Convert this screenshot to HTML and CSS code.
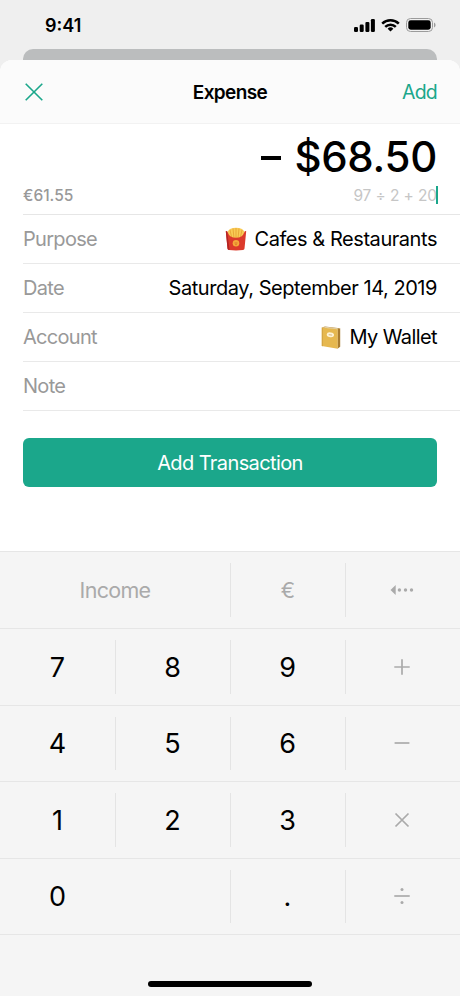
FILE: index.html
```
<!DOCTYPE html>
<html lang="en">

<head>
    <meta charset="UTF-8">
    <meta name="viewport" content="width=device-width, initial-scale=1.0">
    <title>Expense</title>
    <link rel="stylesheet" href="styles.css">
</head>

<body>
    <div class="phone">
        <div class="status">
            <span class="time">9:41</span>
            <svg class="status-icons" width="84" height="16" viewBox="0 0 84 16">
                <rect x="1" y="10" width="4" height="5" rx="1.2" />
                <rect x="6.7" y="7.6" width="4" height="7.4" rx="1.2" />
                <rect x="12.4" y="4.9" width="4" height="10.1" rx="1.2" />
                <rect x="17.9" y="2" width="4" height="13" rx="1.2" />
                <g fill="none" stroke="#000" stroke-width="2.5">
                    <path d="M29.2 6.6a12 12 0 0 1 16.6 0" />
                    <path d="M32.2 9.8a7.6 7.6 0 0 1 10.6 0" />
                </g>
                <path d="M34.6 11.7a4.2 4.2 0 0 1 5.8 0l-2.9 2.9z" />
                <rect x="53.5" y="1.5" width="26" height="13" rx="4" fill="none" stroke="#9b9b9b" />
                <rect x="55.3" y="3.3" width="22.4" height="9.4" rx="2.4" />
                <path d="M81 5.6v4.8q1.6-.8 1.6-2.4T81 5.6z" fill="#9b9b9b" />
            </svg>
        </div>
        <div class="back-card"></div>

        <div class="sheet">
            <div class="header">
                <svg class="close" width="18" height="18" viewBox="0 0 18 18">
                    <path d="M.7.7l16.6 16.6M17.3.7L.7 17.3" />
                </svg>
                <span class="title">Expense</span>
                <span class="add">Add</span>
            </div>

            <div class="amount">
                <div class="total"><span class="minus"></span>$68.50</div>
                <div class="calc">
                    <span class="converted">€61.55</span>
                    <span class="formula">97 ÷ 2 + 20<i class="caret"></i></span>
                </div>
            </div>

            <div class="row">
                <span class="label">Purpose</span>
                <span class="value">
                    <svg width="22" height="24" viewBox="0 0 22 24">
                        <path d="M2.5 4.500L5 2l3-1 3-.3 3 .3 3 1 2.500 2.500L18 13H4z" fill="#f9cb55" />
                        <path d="M5 3l2 9M8 1.500l1 10M11 1v11M14 1.500l-1 10M17 3l-2 9" fill="none" stroke="#e39a2c" stroke-width=".7" />
                        <path d="M.8 4.200Q2 3.800 2.800 5.500 4.500 10.800 11 10.800t8.200-5.300q.8-1.700 2-1.300L19.500 21.500q-.1 1.300-1.500 1.500-7 .8-14 0-1.400-.2-1.500-1.500z" fill="#dc3a2b" />
                        <path d="M.8 4.200q.8-.2 1.400.6L4.600 23l-.6 0q-1.400-.2-1.500-1.500z" fill="#b32424" />
                        <circle cx="11" cy="16.300" r="3.300" fill="#f5a93a" />
                        <path d="M9.500 16h3M10.200 17.600h1.600" stroke="#d66a27" stroke-width=".8" />
                    </svg>
                    <span>Cafes &amp; Restaurants</span>
                </span>
            </div>
            <div class="row">
                <span class="label">Date</span>
                <span class="value">Saturday, September 14, 2019</span>
            </div>
            <div class="row">
                <span class="label">Account</span>
                <span class="value wallet">
                    <svg width="20" height="23" viewBox="0 0 20 23">
                        <path d="M.8 1.500L4 .4l15 1.800-2 1z" fill="#b98d3c" />
                        <path d="M2.500 1.500L4.400.9l13 1.500-1.200.5z" fill="#f3ead2" />
                        <path d="M16.500 3.200l2.700-1v18.500l-2.700 2z" fill="#a97c30" />
                        <path d="M.8 1.500l15.900 1.700v19.500L.8 20z" fill="#e6b84f" />
                        <path d="M.8 1.500l1.200.2v18.500L.8 20z" fill="#d5a644" />
                        <ellipse cx="9.400" cy="8.800" rx="3.700" ry="2.400" fill="#fff4d6" transform="rotate(8 9.400 8.800)" />
                        <path d="M7.700 8.700l3.400.4" stroke="#bb9a5c" stroke-width=".7" />
                    </svg>
                    <span>My Wallet</span>
                </span>
            </div>
            <div class="row">
                <span class="label">Note</span>
            </div>

            <div class="submit">Add Transaction</div>
        </div>

        <div class="keypad">
            <div class="key wide tool">Income</div>
            <div class="key tool">€</div>
            <div class="key tool">
                <svg width="24" height="12" viewBox="0 0 24 12">
                    <path class="solid" d="M.5 6L5.700 1v10z" />
                    <circle class="solid" cx="9.400" cy="6" r="1.700" />
                    <circle class="solid" cx="15.500" cy="6" r="1.700" />
                    <circle class="solid" cx="21.500" cy="6" r="1.700" />
                </svg>
            </div>

            <div class="key">7</div>
            <div class="key">8</div>
            <div class="key">9</div>
            <div class="key"><svg width="16" height="16" viewBox="0 0 16 16"><path d="M.3 8h15.400M8 .3v15.400" /></svg></div>

            <div class="key">4</div>
            <div class="key">5</div>
            <div class="key">6</div>
            <div class="key"><svg width="16" height="16" viewBox="0 0 16 16"><path d="M.6 8h14.800" /></svg></div>

            <div class="key">1</div>
            <div class="key">2</div>
            <div class="key">3</div>
            <div class="key"><svg width="16" height="16" viewBox="0 0 16 16"><path d="M1.500 1.500l13 13M14.500 1.500l-13 13" /></svg></div>

            <div class="key wide zero">0</div>
            <div class="key">.</div>
            <div class="key">
                <svg width="16" height="16" viewBox="0 0 16 16">
                    <path d="M.3 8h15.400" />
                    <circle class="solid" cx="8" cy="1.500" r="1.500" />
                    <circle class="solid" cx="8" cy="14.500" r="1.500" />
                </svg>
            </div>
        </div>
        <div class="home"><div class="home-bar"></div></div>
    </div>
</body>

</html>
```
FILE: styles.css
```
* {
    box-sizing: border-box;
}

body {
    margin: 0;
    background-color: #efefef;
    font-family: Inter, "Liberation Sans", sans-serif;
    color: #000;
}

.phone {
    width: 460px;
    height: 996px;
    display: flex;
    flex-direction: column;
    overflow: hidden;
}

.status {
    height: 49px;
    flex: none;
    display: flex;
    justify-content: space-between;
    align-items: flex-start;
    padding: 15px 23px 0 45px;
}

.time {
    font-size: 18px;
    line-height: 22px;
    font-weight: 600;
}

.status-icons {
    margin-top: 2px;
}

.back-card {
    height: 11px;
    flex: none;
    margin: 0 23px;
    border-radius: 10px 10px 0 0;
    background-color: #bbbdbe;
}

.sheet {
    height: 491px;
    flex: none;
    background-color: #fff;
    border-radius: 12px 12px 0 0;
}

.header {
    height: 64px;
    display: grid;
    grid-template-columns: 1fr auto 1fr;
    align-items: center;
    padding: 0 23px 0 25px;
    background-color: #fbfbfb;
    border-bottom: 1px solid #f2f2f2;
    border-radius: 12px 12px 0 0;
}

.close {
    fill: none;
    stroke: #1ba78b;
    stroke-width: 1.6;
}

.title {
    margin-left: -2px;
    padding-top: 1px;
    font-size: 19px;
    font-weight: 600;
    letter-spacing: -0.6px;
}

.add {
    justify-self: end;
    font-size: 19.5px;
    color: #1ba78b;
    letter-spacing: -0.8px;
}

.amount {
    height: 91px;
    margin-left: 23px;
    padding-right: 23px;
    border-bottom: 1px solid #e6e6e6;
}

.total {
    height: 60px;
    display: flex;
    justify-content: flex-end;
    align-items: center;
    padding-top: 4px;
    font-size: 42px;
    font-weight: 500;
    letter-spacing: -0.3px;
}

.minus {
    width: 20px;
    height: 4px;
    margin: 4px 13px 0 0;
    background-color: #000;
}

.calc {
    height: 22px;
    display: flex;
    justify-content: space-between;
    align-items: center;
    font-size: 15.5px;
}

.converted {
    color: #999;
    font-weight: 500;
}

.formula {
    position: relative;
    color: #c6c6c6;
    letter-spacing: -0.1px;
}

.caret {
    position: absolute;
    top: 0;
    right: -1px;
    width: 2px;
    height: 18px;
    background-color: #1ba78b;
}

.row {
    height: 49px;
    display: flex;
    justify-content: space-between;
    align-items: center;
    margin-left: 23px;
    padding-right: 23px;
    border-bottom: 1px solid #e9e9e9;
    font-size: 20px;
    letter-spacing: -0.45px;
}

.label {
    color: #999;
    letter-spacing: -0.7px;
}

.value {
    display: flex;
    align-items: center;
    gap: 8px;
}

.wallet {
    gap: 9px;
    letter-spacing: -0.6px;
}

.submit {
    height: 49px;
    display: flex;
    align-items: center;
    justify-content: center;
    margin: 27px 23px 0;
    border-radius: 6px;
    background-color: #1ba78b;
    color: #fff;
    font-size: 20px;
    letter-spacing: -0.6px;
}

.keypad {
    height: 384px;
    flex: none;
    display: grid;
    grid-template-columns: repeat(4, 115px);
    grid-template-rows: 77px 77px 76px 77px 76px;
    background-color: #f5f5f5;
    border-top: 1px solid #e6e6e6;
}

.key {
    position: relative;
    display: flex;
    align-items: center;
    justify-content: center;
    border-bottom: 1px solid #e6e6e6;
    font-size: 27px;
}

/* short divider on the right side of a key */
.key:not(:nth-child(4n + 3))::after {
    content: "";
    position: absolute;
    right: -1px;
    top: 11px;
    bottom: 11px;
    width: 1px;
    background-color: #e4e4e4;
}

.wide {
    grid-column: span 2;
}

.zero {
    justify-content: flex-start;
    padding-left: 49px;
}

.tool {
    color: #aaa;
    font-size: 21.5px;
    letter-spacing: -0.7px;
}

.key svg {
    margin: 0 1px 1px 0;
    fill: none;
    stroke: #aaa;
    stroke-width: 1.7;
}

.key svg .solid {
    fill: #aaa;
    stroke: none;
}

.home {
    flex: 1;
    display: flex;
    align-items: flex-end;
    justify-content: center;
    padding-bottom: 9px;
    background-color: #f5f5f5;
}

.home-bar {
    width: 164px;
    height: 6px;
    border-radius: 3px;
    background-color: #000;
}
```
